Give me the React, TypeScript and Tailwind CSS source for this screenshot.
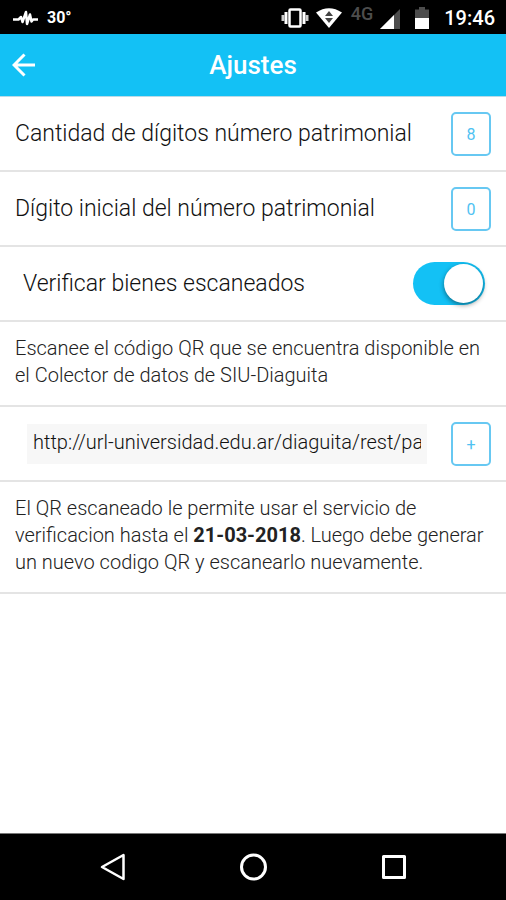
import { useState, type ReactNode } from "react";

function StatusBar() {
  return (
    <div className="flex h-[34px] items-center bg-black pt-px pr-[11px] pl-[13px] font-medium text-white">
      <svg width="25" height="20" viewBox="0 0 25 20" fill="none" stroke="#fff" strokeWidth="2.500" strokeLinejoin="round" aria-hidden="true">
        <path d="M0 11.500h5.500L8 9l1.500 5L13 4l1 12 3-9.500 1.500 7 1.500-2H25" />
      </svg>
      <span className="ml-[9px] text-base font-bold">30°</span>
      <div className="ml-auto flex items-center">
        <svg width="28" height="22" viewBox="0 0 28 22" aria-hidden="true">
          <rect x="8.500" y="2.500" width="11" height="17" rx="1" fill="none" stroke="#fff" strokeWidth="2.500" />
          <path d="M5 5v12M23 5v12" stroke="#fff" strokeWidth="3" />
          <path d="M2 8v6M26 8v6" stroke="#ccc" strokeWidth="3" />
        </svg>
        <svg className="ml-[7px]" width="26" height="20" viewBox="0 0 26 20" aria-hidden="true">
          <path d="M0 4.500Q13-4 26 4.500L13 20z" fill="#fff" />
          <path d="M9 8h8l-4-5zM9 10h8l-4 5z" fill="#444" />
        </svg>
        <span className="mb-2 ml-[9px] text-lg leading-5 text-[#4d4d4d]">4G</span>
        <svg className="mt-0.5 ml-[7px]" width="20" height="20" viewBox="0 0 20 20" aria-hidden="true">
          <path d="M0 20L20 0v20z" fill="#4d4d4d" />
          <path d="M0 20L14 6v14z" fill="#fff" />
        </svg>
        <svg className="ml-[15px]" width="14" height="22" viewBox="0 0 14 22" aria-hidden="true">
          <path d="M0 2.500h4V0h6v2.500h4V11H0z" fill="#4d4d4d" />
          <path d="M0 11h14v11H0z" fill="#fff" />
        </svg>
        <span className="ml-[15px] text-xl">19:46</span>
      </div>
    </div>
  );
}

function Row({ children }: { children: ReactNode }) {
  return (
    <div className="flex h-[75px] items-center justify-between border-b-2 border-[#e4e4e4] px-[15px] text-[23px] font-light">
      {children}
    </div>
  );
}

function OutlineButton({ label, children }: { label: string; children: ReactNode }) {
  return (
    <button
      type="button"
      aria-label={label}
      className="h-11 w-10 shrink-0 rounded-[5px] border-2 border-[#67c8f2] pt-0.5 text-base font-normal text-[#4fc2f2]"
    >
      {children}
    </button>
  );
}

function NavBar() {
  return (
    <nav className="flex h-[67px] items-center justify-center gap-[112px] border-t border-[#777] bg-black">
      <button type="button" aria-label="Atrás">
        <svg width="28" height="28" viewBox="0 0 28 28" fill="none" stroke="#fff" strokeWidth="2.500" strokeLinejoin="round">
          <path d="M24.500 2v24L3 14z" />
        </svg>
      </button>
      <button type="button" aria-label="Inicio">
        <svg width="28" height="28" viewBox="0 0 28 28" fill="none" stroke="#fff" strokeWidth="3">
          <circle cx="14.500" cy="14" r="12" />
        </svg>
      </button>
      <button type="button" aria-label="Recientes">
        <svg width="28" height="28" viewBox="0 0 28 28" fill="none" stroke="#fff" strokeWidth="3" strokeLinejoin="round">
          <rect x="4.500" y="3.500" width="21" height="21" />
        </svg>
      </button>
    </nav>
  );
}

export default function App() {
  const [verify, setVerify] = useState(true);
  const [url, setUrl] = useState("http://url-universidad.edu.ar/diaguita/rest/patrimonio");

  return (
    <div className="flex min-h-screen flex-col bg-white font-['Roboto',sans-serif] text-[#111]">
      <StatusBar />
      <header className="grid h-[63px] grid-cols-[1fr_auto_1fr] items-center border-b border-[#b9dbe8] bg-[#13c1f5] px-3 text-white">
        <button type="button" aria-label="Volver" className="justify-self-start">
          <svg width="23" height="24" viewBox="0 0 23 24" fill="none" stroke="#fff" strokeWidth="3">
            <path d="M12.500 1.500L2 12l10.500 10.500M2 12h21" />
          </svg>
        </button>
        <h1 className="text-[26px] font-medium">Ajustes</h1>
      </header>
      <main className="grow">
        <Row>
          <span className="pt-0.5">Cantidad de dígitos número patrimonial</span>
          <OutlineButton label="Cantidad de dígitos: 8">8</OutlineButton>
        </Row>
        <Row>
          <span className="pt-0.5">Dígito inicial del número patrimonial</span>
          <OutlineButton label="Dígito inicial: 0">0</OutlineButton>
        </Row>
        <Row>
          <label htmlFor="verify" className="pt-0.5 pl-2">Verificar bienes escaneados</label>
          <input
            id="verify"
            type="checkbox"
            role="switch"
            checked={verify}
            onChange={(e) => setVerify(e.target.checked)}
            className="mr-[6px] flex h-[43px] w-[72px] shrink-0 appearance-none items-center rounded-full bg-[#ccc] px-[2px] before:size-[39px] before:rounded-full before:bg-white before:shadow-[0_2px_5px_rgba(0,0,0,0.45)] checked:justify-end checked:bg-[#13c1f5]"
          />
        </Row>
        <p className="border-b-2 border-[#e4e4e4] px-[15px] pt-[13px] pb-4 text-xl leading-[27px] font-light text-[#222]">
          Escanee el código QR que se encuentra disponible en el Colector de datos de SIU-Diaguita
        </p>
        <Row>
          <input
            type="text"
            aria-label="URL del servicio"
            value={url}
            onChange={(e) => setUrl(e.target.value)}
            className="mr-6 ml-3 h-10 min-w-0 grow bg-[#f7f7f7] px-[6px] pb-1 text-xl"
          />
          <OutlineButton label="Escanear código QR">+</OutlineButton>
        </Row>
        <p className="border-b-2 border-[#e4e4e4] px-[15px] pt-[13px] pb-4 text-xl leading-[27px] font-light text-[#222]">
          El QR escaneado le permite usar el servicio de verificacion hasta el{" "}
          <strong className="font-bold">21-03-2018</strong>. Luego debe generar un nuevo codigo QR y
          escanearlo nuevamente.
        </p>
      </main>
      <NavBar />
    </div>
  );
}
